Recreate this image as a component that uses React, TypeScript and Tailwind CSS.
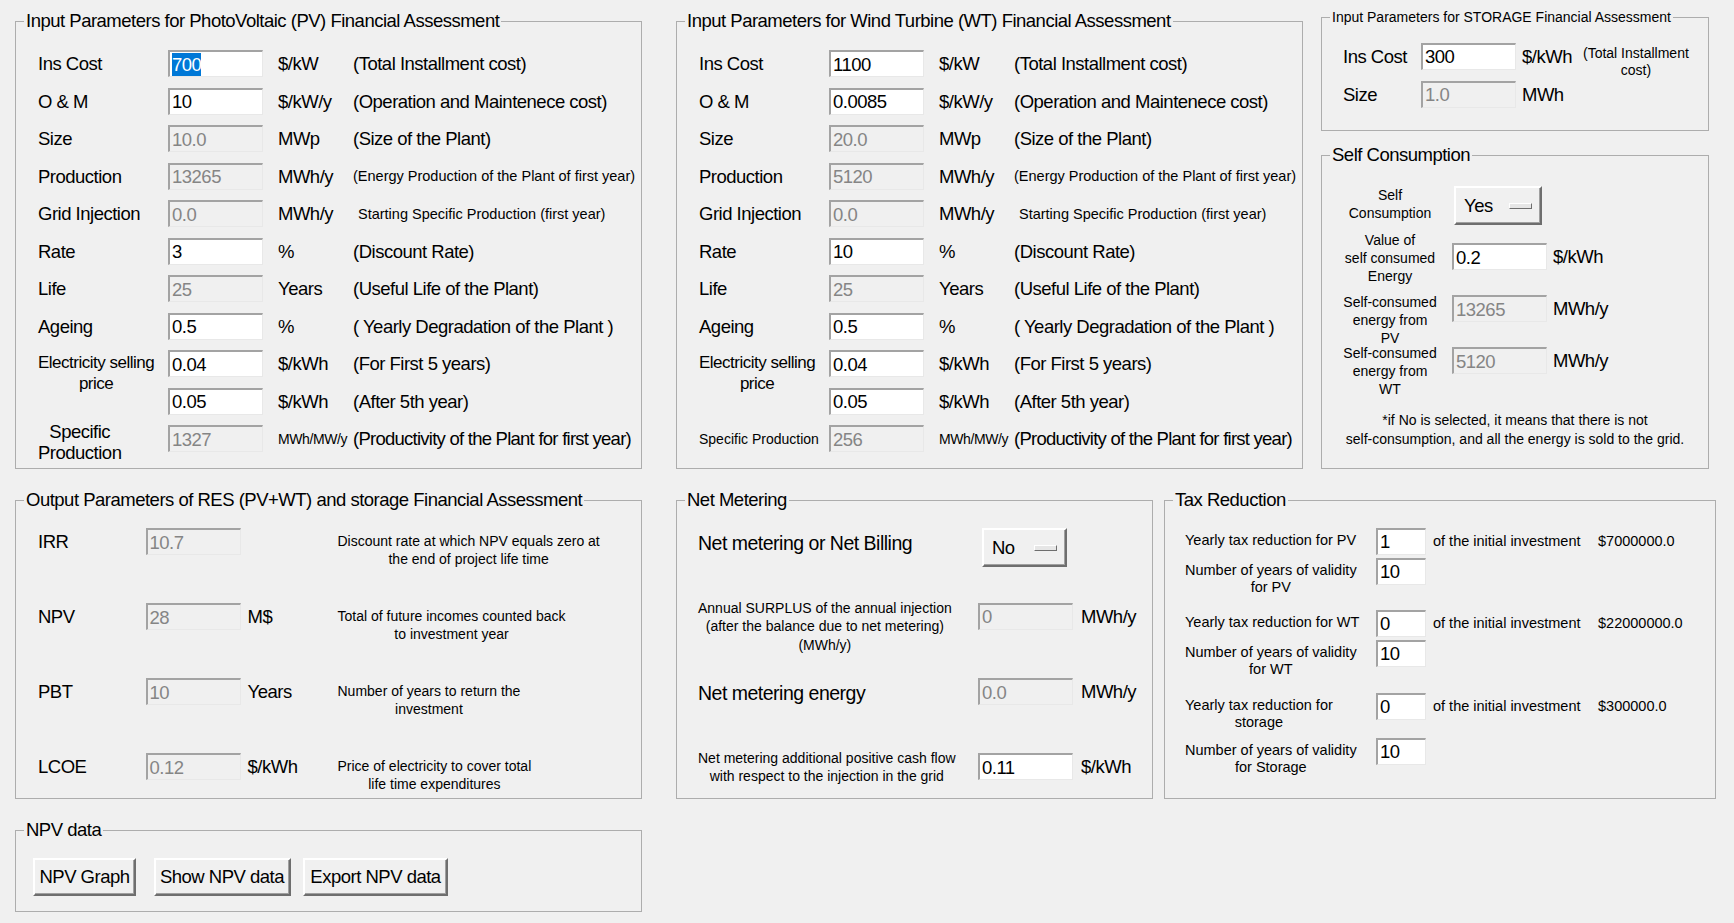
import React from 'react';

const FACE = "font-['Liberation_Sans',Arial,sans-serif]";
const BIG = `${FACE} text-[18.5px] tracking-[-0.5px]`;
const BIG_TIGHT = `${FACE} text-[18.5px] tracking-[-0.75px]`;
const BIGGER = `${FACE} text-[19.5px] tracking-[-0.5px]`;
const MID = `${FACE} text-[17px] tracking-[-0.5px]`;
const SM = `${FACE} text-[14.5px]`;
const SM14 = `${FACE} text-[14px]`;
const TINY = `${FACE} text-[14px] tracking-[-0.4px]`;
const RAISED =
  'bg-[#f0f0f0] border-2 border-t-white border-l-white border-r-[#6e6e6e] border-b-[#6e6e6e] shadow-[inset_-1px_-1px_0_#a0a0a0]';

type FrameProps = { title: string; small?: boolean; className?: string; children: React.ReactNode };

const Frame: React.FC<FrameProps> = ({ title, small, className = '', children }) => (
  <fieldset className={`min-w-0 shrink-0 border border-[#adadad] ${className}`}>
    <legend className={`ml-[8px] px-[2px] whitespace-nowrap ${small ? `${SM14} leading-[16px]` : `${BIG} leading-[22px]`}`}>
      {title}
    </legend>
    {children}
  </fieldset>
);

type EntryProps = { v: string; off?: boolean; sel?: boolean; short?: boolean; className?: string };

const Entry: React.FC<EntryProps> = ({ v, off, sel, short, className = '' }) => (
  <div
    className={`${short ? 'w-[50px]' : 'w-[95px]'} h-[27px] shrink-0 flex items-center pl-[2px] overflow-hidden whitespace-nowrap border-t-2 border-l-2 border-r border-b border-t-[#a3a3a3] border-l-[#a3a3a3] border-r-[#e8e8e8] border-b-[#e8e8e8] ${BIG} leading-[23px] ${
      off ? 'bg-[#f0f0f0] text-[#858585]' : 'bg-white text-black'
    } ${className}`}
  >
    {sel ? <span className="bg-[#0078d7] text-white">{v}</span> : v}
  </div>
);

const OptionMenu: React.FC<{ value: string; className?: string }> = ({ value, className = '' }) => (
  <div className={`flex items-center h-[39px] shrink-0 pl-[8px] ${RAISED} ${className}`}>
    <span className={`${BIG} leading-[27px]`}>{value}</span>
    <span className="ml-auto mr-[8px] w-[23px] h-[6px] bg-[#e6e6e6] border border-t-white border-l-white border-r-[#6e6e6e] border-b-[#6e6e6e]" />
  </div>
);

const Button: React.FC<{ label: string; className?: string }> = ({ label, className = '' }) => (
  <div className={`h-[38px] flex items-center justify-center shrink-0 whitespace-nowrap ${RAISED} ${BIG} leading-[27px] ${className}`}>
    {label}
  </div>
);

type PlantRow = {
  label: string;
  unit: string;
  desc: string;
  off?: boolean;
  smallDesc?: boolean;
  indent?: boolean;
};

const plantRows: PlantRow[] = [
  { label: 'Ins Cost', unit: '$/kW', desc: '(Total Installment cost)' },
  { label: 'O & M', unit: '$/kW/y', desc: '(Operation and Maintenece cost)' },
  { label: 'Size', unit: 'MWp', desc: '(Size of the Plant)', off: true },
  { label: 'Production', unit: 'MWh/y', desc: '(Energy Production of the Plant of first year)', off: true, smallDesc: true },
  { label: 'Grid Injection', unit: 'MWh/y', desc: 'Starting Specific Production (first year)', off: true, smallDesc: true, indent: true },
  { label: 'Rate', unit: '%', desc: '(Discount Rate)' },
  { label: 'Life', unit: 'Years', desc: '(Useful Life of the Plant)', off: true },
  { label: 'Ageing', unit: '%', desc: '( Yearly Degradation of the Plant )' },
  { label: 'elec', unit: '$/kWh', desc: '(For First 5 years)' },
  { label: '', unit: '$/kWh', desc: '(After 5th year)' },
  { label: 'spec', unit: 'MWh/MW/y', desc: '(Productivity of the Plant for first year)', off: true },
];

const PlantFrame: React.FC<{ title: string; values: string[]; pv?: boolean; className?: string }> = ({ title, values, pv, className = '' }) => (
  <Frame title={title} className={`w-[627px] h-[459px] ${className}`}>
    <div className="grid grid-cols-[130px_110px_75px_1fr] auto-rows-[37.5px] items-center pl-[22px] pt-[12.75px]">
      {plantRows.map((r, i) => (
        <React.Fragment key={i}>
          {r.label === 'elec' ? (
            <div className={`row-span-2 self-start pt-[7.5px] w-fit text-center ${MID} leading-[21px]`}>
              Electricity selling
              <br />
              price
            </div>
          ) : r.label === 'spec' ? (
            pv ? (
              <div className={`self-start mt-[1.5px] w-fit text-center ${BIG} leading-[21px]`}>
                Specific
                <br />
                Production
              </div>
            ) : (
              <div className={`${SM14} leading-[20px] whitespace-nowrap`}>Specific Production</div>
            )
          ) : r.label ? (
            <div className={`${BIG} leading-[27px] whitespace-nowrap`}>{r.label}</div>
          ) : null}
          <Entry v={values[i]} off={r.off} sel={pv && i === 0} />
          {r.unit === 'MWh/MW/y' ? (
            <div className={`${TINY} leading-[20px] whitespace-nowrap`}>{r.unit}</div>
          ) : (
            <div className={`${BIG} leading-[27px]`}>{r.unit}</div>
          )}
          <div
            className={`whitespace-nowrap ${r.smallDesc ? `${SM} leading-[20px]` : i === 10 ? `${BIG_TIGHT} leading-[27px]` : `${BIG} leading-[27px]`} ${
              r.indent ? 'pl-[5px]' : ''
            }`}
          >
            {r.desc}
          </div>
        </React.Fragment>
      ))}
    </div>
  </Frame>
);

const StorageFrame: React.FC = () => (
  <Frame title="Input Parameters for STORAGE Financial Assessment" small className="w-[388px] h-[122px]">
    <div className="grid grid-cols-[78px_101px_61px_1fr] auto-rows-[38px] items-center pl-[21px] pt-[12px]">
      <div className={`${BIG} leading-[27px] whitespace-nowrap`}>Ins Cost</div>
      <Entry v="300" />
      <div className={`${BIG} leading-[27px]`}>$/kWh</div>
      <div className={`self-start mt-[8px] w-fit text-center ${SM14} leading-[17px]`}>
        (Total Installment
        <br />
        cost)
      </div>
      <div className={`${BIG} leading-[27px]`}>Size</div>
      <Entry v="1.0" off />
      <div className={`${BIG} leading-[27px]`}>MWh</div>
      <div />
    </div>
  </Frame>
);

const SelfRow: React.FC<{ lines: string[]; h: string; mt: string; v: string; off?: boolean; unit: string }> = ({ lines, h, mt, v, off, unit }) => (
  <div className={`flex items-start pl-[18px] ${h}`}>
    <div className={`w-[100px] text-center ${SM14} leading-[18px]`}>
      {lines.map((l, i) => (
        <div key={i}>{l}</div>
      ))}
    </div>
    <div className={`flex items-center ml-[12px] ${mt}`}>
      <Entry v={v} off={off} />
      <span className={`ml-[6px] ${BIG} leading-[27px]`}>{unit}</span>
    </div>
  </div>
);

const SelfConsumptionFrame: React.FC = () => (
  <Frame title="Self Consumption" className="w-[388px] h-[325px] mt-[13px]">
    <div className="flex flex-col pt-[20px]">
      <div className="flex items-start h-[45px] pl-[18px]">
        <div className={`w-[100px] mt-[1px] text-center ${SM14} leading-[17.5px]`}>
          Self
          <br />
          Consumption
        </div>
        <OptionMenu value="Yes" className="ml-[14px] w-[88px]" />
      </div>
      <SelfRow lines={['Value of', 'self consumed', 'Energy']} h="h-[61.5px]" mt="mt-[12px]" v="0.2" unit="$/kWh" />
      <SelfRow lines={['Self-consumed', 'energy from', 'PV']} h="h-[51.5px]" mt="mt-[2.5px]" v="13265" off unit="MWh/y" />
      <SelfRow lines={['Self-consumed', 'energy from', 'WT']} h="h-[66.5px]" mt="mt-[3px]" v="5120" off unit="MWh/y" />
      <div className={`text-center ${SM14} leading-[19px]`}>
        *if No is selected, it means that there is not
        <br />
        self-consumption, and all the energy is sold to the grid.
      </div>
    </div>
  </Frame>
);

const outputRows = [
  { l: 'IRR', v: '10.7', u: '', d: ['Discount rate at which NPV equals zero at', 'the end of project life time'] },
  { l: 'NPV', v: '28', u: 'M$', d: ['Total of future incomes counted back', 'to investment year'] },
  { l: 'PBT', v: '10', u: 'Years', d: ['Number of years to return the', 'investment'] },
  { l: 'LCOE', v: '0.12', u: '$/kWh', d: ['Price of electricity to cover total', 'life time expenditures'] },
];

const OutputFrame: React.FC = () => (
  <Frame title="Output Parameters of RES (PV+WT) and storage Financial Assessment" className="w-[627px] h-[310px]">
    <div className="flex flex-col pt-[17px] pl-[22px]">
      {outputRows.map((r) => (
        <div key={r.l} className="flex items-start h-[75px]">
          <div className={`w-[107.5px] ${BIG} leading-[27px]`}>{r.l}</div>
          <Entry v={r.v} off />
          <div className={`ml-[7px] w-[90px] ${BIG} leading-[27px]`}>{r.u}</div>
          <div className={`mt-[4px] w-fit text-center ${SM14} leading-[18px]`}>
            {r.d[0]}
            <br />
            {r.d[1]}
          </div>
        </div>
      ))}
    </div>
  </Frame>
);

const NpvFrame: React.FC = () => (
  <Frame title="NPV data" className="w-[627px] h-[93px] mt-[20px]">
    <div className="flex items-start pt-[16.5px] pl-[17px]">
      <Button label="NPV Graph" className="w-[103px]" />
      <Button label="Show NPV data" className="w-[137px] ml-[17.5px]" />
      <Button label="Export NPV data" className="w-[145px] ml-[12.5px]" />
    </div>
  </Frame>
);

const NetMeteringFrame: React.FC = () => (
  <Frame title="Net Metering" className="w-[477px] h-[310px] ml-[34px]">
    <div className="flex flex-col pt-[17px] pl-[21px]">
      <div className="flex items-start h-[70.5px]">
        <div className={`w-[280px] ${BIGGER} leading-[30px]`}>Net metering or Net Billing</div>
        <OptionMenu value="No" className="ml-[4px] w-[85px]" />
      </div>
      <div className="flex items-start h-[79.5px]">
        <div className="w-[280px]">
          <div className={`w-fit text-center ${SM14} leading-[18.7px]`}>
            Annual SURPLUS of the annual injection
            <br />
            (after the balance due to net metering)
            <br />
            (MWh/y)
          </div>
        </div>
        <div className="flex items-center mt-[4px]">
          <Entry v="0" off />
          <span className={`ml-[8px] ${BIG} leading-[27px]`}>MWh/y</span>
        </div>
      </div>
      <div className="flex items-start h-[70.5px]">
        <div className={`w-[280px] ${BIGGER} leading-[30px]`}>Net metering energy</div>
        <div className="flex items-center">
          <Entry v="0.0" off />
          <span className={`ml-[8px] ${BIG} leading-[27px]`}>MWh/y</span>
        </div>
      </div>
      <div className="flex items-start">
        <div className="w-[280px]">
          <div className={`w-fit text-center ${SM14} leading-[18.5px]`}>
            Net metering additional positive cash flow
            <br />
            with respect to the injection in the grid
          </div>
        </div>
        <div className="flex items-center mt-[4.5px]">
          <Entry v="0.11" />
          <span className={`ml-[8px] ${BIG} leading-[27px]`}>$/kWh</span>
        </div>
      </div>
    </div>
  </Frame>
);

const taxRows = [
  { lines: ['Yearly tax reduction for PV'], v: '1', amount: '$7000000.0', h: 'h-[30.3px]' },
  { lines: ['Number of years of validity', 'for PV'], v: '10', amount: '', h: 'h-[52px]' },
  { lines: ['Yearly tax reduction for WT'], v: '0', amount: '$22000000.0', h: 'h-[30px]' },
  { lines: ['Number of years of validity', 'for WT'], v: '10', amount: '', h: 'h-[52.7px]' },
  { lines: ['Yearly tax reduction for', 'storage'], v: '0', amount: '$300000.0', h: 'h-[45px]' },
  { lines: ['Number of years of validity', 'for Storage'], v: '10', amount: '', h: 'h-[40px]' },
];

const TaxFrame: React.FC = () => (
  <Frame title="Tax Reduction" className="w-[552px] h-[310px] ml-[11px]">
    <div className="flex flex-col pt-[16.7px] pl-[20px]">
      {taxRows.map((r, i) => (
        <div key={i} className={`flex items-start ${r.h}`}>
          <div className="w-[191px]">
            <div className={`w-fit mt-[4px] text-center ${SM} leading-[17.5px]`}>
              {r.lines.map((l, j) => (
                <div key={j}>{l}</div>
              ))}
            </div>
          </div>
          <Entry v={r.v} short />
          {r.amount && (
            <>
              <div className={`ml-[7px] w-[165px] ${SM} leading-[27px]`}>of the initial investment</div>
              <div className={`${SM} leading-[27px]`}>{r.amount}</div>
            </>
          )}
        </div>
      ))}
    </div>
  </Frame>
);

export default function App() {
  return (
    <div className="w-[1734px] h-[923px] overflow-hidden bg-[#f0f0f0] text-black">
      <div className="flex items-start pt-[9px]">
        <PlantFrame
          pv
          title="Input Parameters for PhotoVoltaic (PV) Financial Assessment"
          values={['700', '10', '10.0', '13265', '0.0', '3', '25', '0.5', '0.04', '0.05', '1327']}
          className="ml-[15px] mt-[1px]"
        />
        <PlantFrame
          title="Input Parameters for Wind Turbine (WT) Financial Assessment"
          values={['1100', '0.0085', '20.0', '5120', '0.0', '10', '25', '0.5', '0.04', '0.05', '256']}
          className="ml-[34px] mt-[1px]"
        />
        <div className="ml-[18px] w-[388px] flex flex-col">
          <StorageFrame />
          <SelfConsumptionFrame />
        </div>
      </div>
      <div className="flex items-start mt-[20px]">
        <div className="ml-[15px] w-[627px] flex flex-col">
          <OutputFrame />
          <NpvFrame />
        </div>
        <NetMeteringFrame />
        <TaxFrame />
      </div>
    </div>
  );
}
